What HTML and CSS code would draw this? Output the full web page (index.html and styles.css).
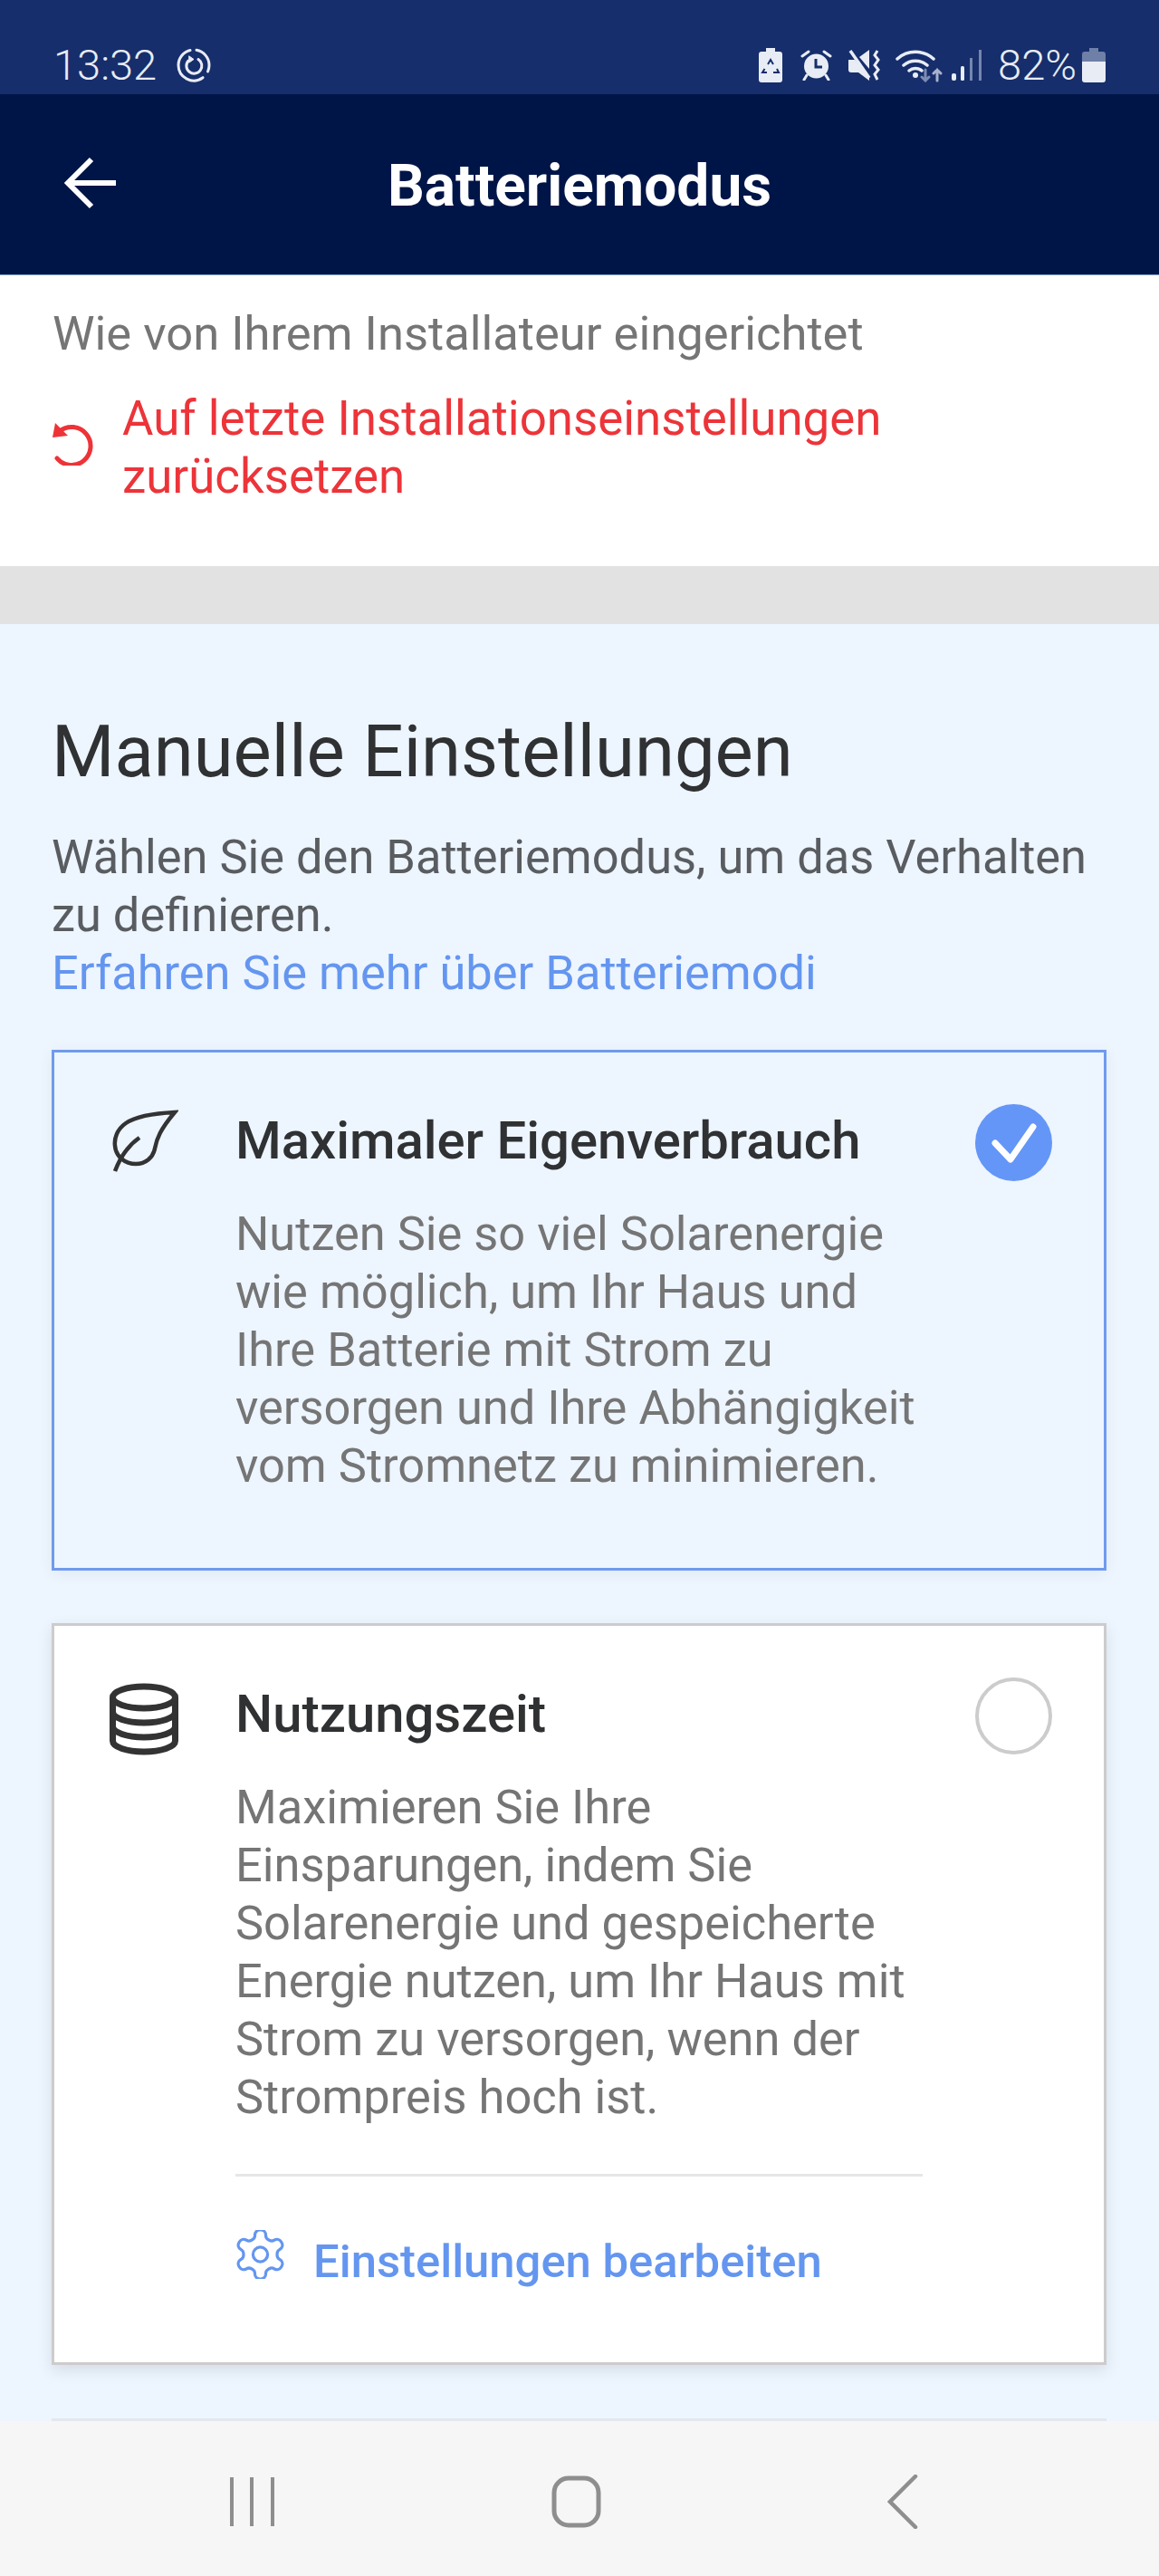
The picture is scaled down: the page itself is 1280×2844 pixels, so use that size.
FILE: index.html
```html
<!DOCTYPE html>
<html lang="de">
<head>
    <meta charset="utf-8">
    <title>Batteriemodus</title>
    <link rel="stylesheet" href="styles.css">
</head>
<body>
    <header class="status-bar">
        <div class="status-left">
            <span class="clock">13:32</span>
            <svg class="icon-sync" width="40" height="40" viewBox="0 0 40 40" fill="none" stroke="#e8ecf5" stroke-width="3" stroke-linecap="round">
                <path d="M23 3.3A17 17 0 0 1 37 20a17 17 0 0 1-1.500 7"/>
                <path d="M30 33.700A17 17 0 0 1 3 20 17 17 0 0 1 16 3.500"/>
                <path d="M25 13.500A8.500 8.500 0 1 1 14 15"/>
                <path d="M15 10l5 3.500-5 3.500z" fill="#e8ecf5" stroke-width="1"/>
            </svg>
        </div>
        <div class="status-right">
            <svg class="icon-recycle" width="26" height="38" viewBox="0 0 26 38">
                <path d="M8 0h10v4h5a3 3 0 0 1 3 3v28a3 3 0 0 1-3 3H3a3 3 0 0 1-3-3V7a3 3 0 0 1 3-3h5z" fill="#e8ecf5"/>
                <path d="M10 18l3-5 3 5M20 23l2 4h-6M9 27H4l2.500-4" fill="none" stroke="#162e6b" stroke-width="2"/>
            </svg>
            <svg class="icon-alarm" width="35" height="34" viewBox="0 0 35 34">
                <circle cx="17.500" cy="18" r="13.500" fill="#e8ecf5"/>
                <path d="M17 10v9h7" fill="none" stroke="#162e6b" stroke-width="3"/>
                <path d="M2 7l7-5M33 7l-7-5M7 28l-3 5M28 28l3 5" stroke="#e8ecf5" stroke-width="3" stroke-linecap="round"/>
            </svg>
            <svg class="icon-mute" width="36" height="34" viewBox="0 0 36 34">
                <path d="M0 11h7l16 18v5L11 25H3a3 3 0 0 1-3-3zM12 8l11-8v21z" fill="#e8ecf5"/>
                <path d="M2 1l21 30" stroke="#e8ecf5" stroke-width="3.500"/>
                <path d="M32 1l-3 5 4 5-4 6 4 5-4 5 3 6" fill="none" stroke="#e8ecf5" stroke-width="3"/>
            </svg>
            <svg class="icon-wifi" width="52" height="38" viewBox="0 0 52 38" fill="none" stroke-linecap="round">
                <path d="M2 12a30 30 0 0 1 40 0M9 19a20 20 0 0 1 26 0M15 25a11 11 0 0 1 14 0" stroke="#e8ecf5" stroke-width="3.500"/>
                <circle cx="22" cy="30" r="3" fill="#e8ecf5"/>
                <path d="M33 24v12M29 32l4 4 4-4" stroke="#7c8cb3" stroke-width="3"/>
                <path d="M46 36V24M42 28l4-4 4 4" stroke="#a7b2cc" stroke-width="3"/>
            </svg>
            <svg class="icon-signal" width="34" height="34" viewBox="0 0 34 34">
                <rect x="0" y="26" width="5" height="8" rx="2" fill="#e8ecf5"/>
                <rect x="10" y="18" width="4" height="16" rx="1.500" fill="#e8ecf5"/>
                <rect x="20" y="9" width="3" height="25" fill="#7586ae"/>
                <rect x="30" y="0" width="3" height="34" fill="#7586ae"/>
            </svg>
            <span class="battery-text">82%</span>
            <svg class="icon-battery" width="26" height="38" viewBox="0 0 26 38">
                <path d="M8 0h10v4h5a3 3 0 0 1 3 3v8H0V7a3 3 0 0 1 3-3h5z" fill="#6e7fa8"/>
                <path d="M0 15h26v20a3 3 0 0 1-3 3H3a3 3 0 0 1-3-3z" fill="#e8ecf5"/>
            </svg>
        </div>
    </header>

    <div class="app-bar">
        <svg class="back-arrow" width="60" height="58" viewBox="0 0 60 58" fill="none" stroke="#fff" stroke-width="6">
            <path d="M31 3L5 29l26 26M5 29h53"/>
        </svg>
        <h1>Batteriemodus</h1>
    </div>

    <main class="content">
        <section class="installer-section">
            <p class="installer-text">Wie von Ihrem Installateur eingerichtet</p>
            <div class="reset-link">
                <svg class="reset-icon" width="46" height="48" viewBox="0 0 46 48" fill="none">
                    <path d="M5 40A21 21 0 1 0 8 10" stroke="#ee3338" stroke-width="5" stroke-linecap="round"/>
                    <path d="M3 1L0 17l17-2z" fill="#ee3338"/>
                </svg>
                <span>Auf letzte Installationseinstellungen zurücksetzen</span>
            </div>
        </section>

        <div class="section-gap"></div>

        <section class="manual-section">
            <h2>Manuelle Einstellungen</h2>
            <p class="intro">Wählen Sie den Batteriemodus, um das Verhalten zu definieren.<br><a class="more-link">Erfahren Sie mehr über Batteriemodi</a></p>

            <div class="mode-card mode-selected">
                <svg class="mode-icon" width="76" height="72" viewBox="0 0 72 72" fill="none" stroke="#333" stroke-width="4.500">
                    <path d="M70 3C50 4 28 7 16 15 6 22 3 32 4 40c1 12 11 20 23 20 11 0 19-7 21-17C50 32 54 22 70 3z"/>
                    <path d="M4 68C10 52 18 40 31 31"/>
                </svg>
                <div class="mode-body">
                    <h3>Maximaler Eigenverbrauch</h3>
                    <p>Nutzen Sie so viel Solarenergie wie möglich, um Ihr Haus und Ihre Batterie mit Strom zu versorgen und Ihre Abhängigkeit vom Stromnetz zu minimieren.</p>
                </div>
                <svg class="mode-check" width="85" height="85" viewBox="0 0 85 85">
                    <circle cx="42.500" cy="42.500" r="42.500" fill="#6496f7"/>
                    <path d="M22 43l17 18 25-36" fill="none" stroke="#fff" stroke-width="7" stroke-linecap="round" stroke-linejoin="round"/>
                </svg>
            </div>

            <div class="mode-card">
                <svg class="mode-icon" width="76" height="80" viewBox="0 0 76 80" fill="none" stroke="#333" stroke-width="7">
                    <ellipse cx="38" cy="16" rx="34.500" ry="12"/>
                    <path d="M3.500 16v48a34.500 12 0 0 0 69 0V16"/>
                    <path d="M3.500 32a34.500 12 0 0 0 69 0M3.500 48a34.500 12 0 0 0 69 0"/>
                </svg>
                <div class="mode-body">
                    <h3>Nutzungszeit</h3>
                    <p>Maximieren Sie Ihre Einsparungen, indem Sie Solarenergie und gespeicherte Energie nutzen, um Ihr Haus mit Strom zu versorgen, wenn der Strompreis hoch ist.</p>
                    <div class="mode-divider"></div>
                    <a class="edit-link">
                        <svg class="edit-gear" width="55" height="54" viewBox="2 2 20 20" fill="none" stroke="#6496f0" stroke-width="1.200">
                            <path d="M12.220 2h-.44a2 2 0 0 0-2 2v.18a2 2 0 0 1-1 1.730l-.43.25a2 2 0 0 1-2 0l-.15-.08a2 2 0 0 0-2.730.73l-.22.38a2 2 0 0 0 .73 2.730l.15.1a2 2 0 0 1 1 1.720v.51a2 2 0 0 1-1 1.740l-.15.09a2 2 0 0 0-.73 2.730l.22.38a2 2 0 0 0 2.730.73l.15-.08a2 2 0 0 1 2 0l.43.25a2 2 0 0 1 1 1.730V20a2 2 0 0 0 2 2h.44a2 2 0 0 0 2-2v-.18a2 2 0 0 1 1-1.730l.43-.25a2 2 0 0 1 2 0l.15.08a2 2 0 0 0 2.730-.73l.22-.39a2 2 0 0 0-.73-2.730l-.15-.08a2 2 0 0 1-1-1.740v-.5a2 2 0 0 1 1-1.740l.15-.09a2 2 0 0 0 .73-2.730l-.22-.38a2 2 0 0 0-2.730-.73l-.15.08a2 2 0 0 1-2 0l-.43-.25a2 2 0 0 1-1-1.730V4a2 2 0 0 0-2-2z"/>
                            <circle cx="12" cy="12" r="3"/>
                        </svg>
                        <span>Einstellungen bearbeiten</span>
                    </a>
                </div>
                <span class="mode-radio"></span>
            </div>

            <div class="bottom-divider"></div>
        </section>
    </main>

    <nav class="nav-bar">
        <svg width="49" height="56" viewBox="0 0 49 56" stroke="#8e8e8e" stroke-width="4">
            <path d="M2 1v54M24 1v54M47 1v54"/>
        </svg>
        <svg width="55" height="58" viewBox="0 0 55 58" fill="none" stroke="#8e8e8e" stroke-width="5">
            <rect x="3" y="3" width="49" height="52" rx="16"/>
        </svg>
        <svg width="34" height="60" viewBox="0 0 34 60" fill="none" stroke="#8e8e8e" stroke-width="4.500" stroke-linecap="round">
            <path d="M31 2L3 30l28 28"/>
        </svg>
    </nav>
</body>
</html>
```

FILE: styles.css
```css
* {
    box-sizing: border-box;
}

html, body {
    margin: 0;
    height: 2844px;
    overflow: hidden;
}

body {
    display: flex;
    flex-direction: column;
    font-family: Roboto, "Liberation Sans", sans-serif;
    background: #edf5ff;
}

svg {
    display: block;
    flex-shrink: 0;
}

/* Android status bar */
.status-bar {
    height: 104px;
    flex-shrink: 0;
    display: flex;
    justify-content: space-between;
    align-items: center;
    padding: 40px 59px 0 59px;
    background: #162e6b;
    color: #e8ecf5;
}

.status-left,
.status-right {
    display: flex;
    align-items: center;
}

.clock,
.battery-text {
    font-size: 47px;
    font-weight: 300;
    line-height: 50px;
}

.icon-sync { margin-left: 21px; }
.icon-alarm { margin-left: 20px; }
.icon-mute { margin-left: 18px; }
.icon-wifi { margin-left: 16px; }
.icon-signal { margin-left: 10px; }
.battery-text { margin-left: 17px; }
.icon-battery { margin-left: 6px; }

/* App bar */
.app-bar {
    height: 200px;
    flex-shrink: 0;
    display: flex;
    align-items: center;
    justify-content: center;
    position: relative;
    background: #001547;
    border-bottom: 1px solid #8fb0d8;
}

.back-arrow {
    position: absolute;
    left: 70px;
    top: 69px;
}

.app-bar h1 {
    margin: 4px 0 0;
    color: #fff;
    font-size: 64px;
    font-weight: 700;
    line-height: 70px;
}

.content {
    flex: 1;
    min-height: 0;
    overflow: hidden;
}

/* Installer block */
.installer-section {
    height: 321px;
    padding: 32px 58px 0;
    background: #fff;
}

.installer-text {
    margin: 0 0 30px;
    color: #757575;
    font-size: 52.5px;
    line-height: 64px;
}

.reset-link {
    display: flex;
    align-items: center;
    gap: 31px;
    color: #ec3439;
    font-size: 52.8px;
    line-height: 64px;
}

.reset-icon {
    margin: -4px 0 4px;
}

.section-gap {
    height: 64px;
    background: #e2e2e2;
}

/* Manual settings */
.manual-section {
    padding: 93px 58px 0 57px;
}

.manual-section h2 {
    margin: 0 0 36px;
    color: #2f3133;
    font-size: 79.6px;
    font-weight: 400;
    line-height: 96px;
}

.intro {
    margin: 0 0 53px;
    color: #595c60;
    font-size: 52.4px;
    line-height: 64px;
}

.more-link {
    color: #6496f0;
}

.mode-card {
    display: flex;
    align-items: flex-start;
    margin-bottom: 58px;
    padding: 57px 57px 79px 61px;
    background: #fff;
    border: 3px solid #ccc;
    box-shadow: 0 6px 16px rgba(0, 0, 0, 0.1);
}

.mode-selected {
    padding-bottom: 81px;
    background: #edf5ff;
    border-color: #6f9bed;
    box-shadow: 0 3px 16px rgba(0, 0, 0, 0.06);
}

.mode-icon {
    margin: 6px 63px 0 0;
}

.mode-body {
    width: 759px;
    padding-top: 8px;
}

.mode-body h3 {
    margin: 0 0 39px;
    color: #2f3133;
    font-size: 58px;
    font-weight: 500;
    line-height: 64px;
}

.mode-body p {
    margin: 0;
    color: #757575;
    font-size: 52.4px;
    line-height: 64px;
}

.mode-check,
.mode-radio {
    margin-left: auto;
    flex-shrink: 0;
}

.mode-radio {
    width: 85px;
    height: 85px;
    border: 4px solid #ccc;
    border-radius: 50%;
}

.mode-divider {
    height: 3px;
    margin: 53px 0 62px;
    background: #e6e6e6;
}

.edit-link {
    display: flex;
    align-items: center;
    gap: 31px;
    color: #6496f0;
    font-size: 50.8px;
    font-weight: 500;
    line-height: 64px;
}

.edit-gear {
    margin: -8px 0 8px;
}

.bottom-divider {
    height: 4px;
    margin-top: 59px;
    background: #e3e8ee;
}

/* Android nav bar */
.nav-bar {
    height: 171px;
    flex-shrink: 0;
    display: grid;
    grid-template-columns: 358px 358px 364px;
    justify-items: center;
    align-items: center;
    padding: 7px 0 0 99px;
    background: #f6f6f6;
}
```
